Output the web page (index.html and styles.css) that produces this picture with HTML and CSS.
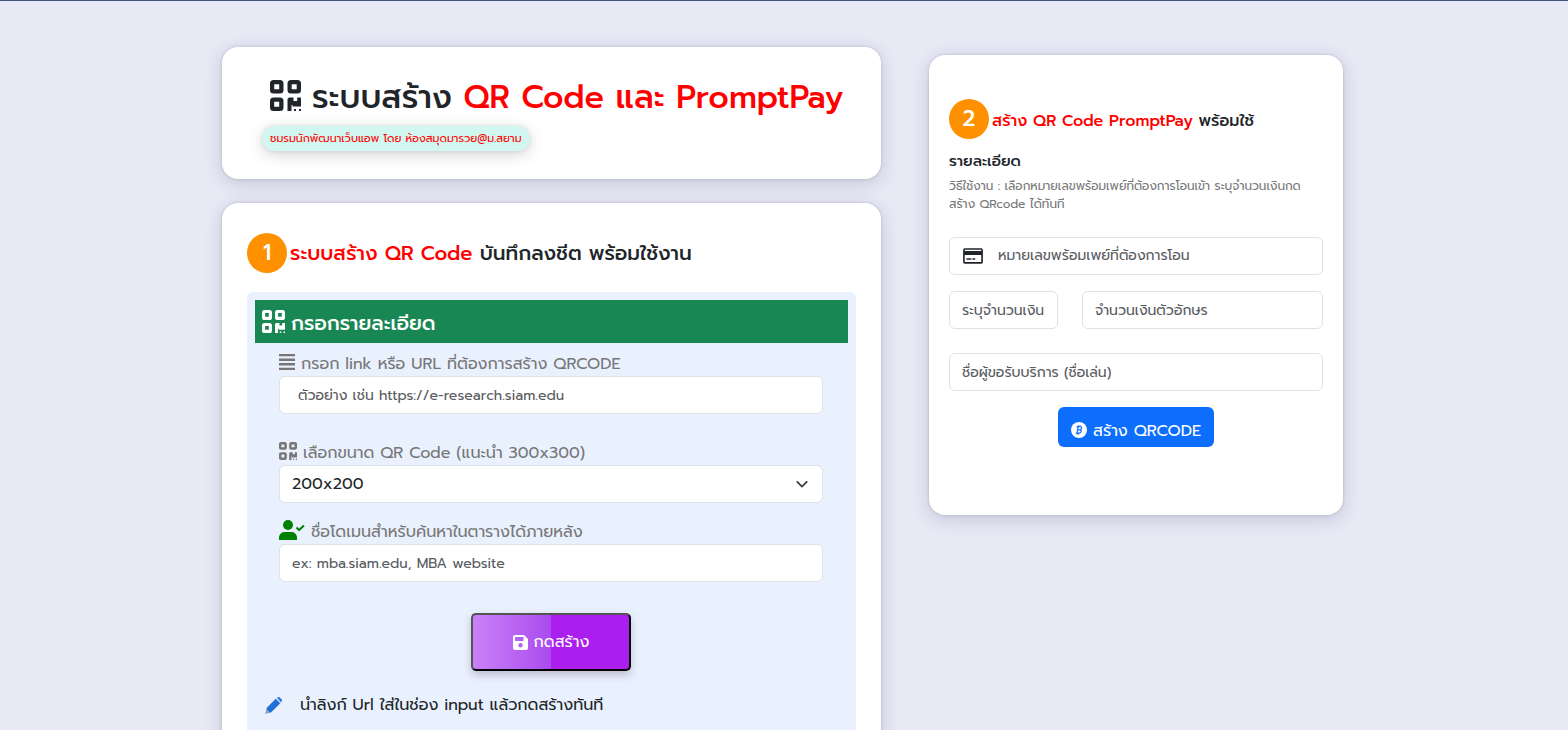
FILE: index.html
```html
<!DOCTYPE html>
<html lang="th">
<head>
<meta charset="utf-8">
<meta name="viewport" content="width=device-width, initial-scale=1">
<title>ระบบสร้าง QR Code และ PromptPay</title>
<link rel="stylesheet" href="styles.css">
</head>
<body>
<svg class="sprite" aria-hidden="true">
  <symbol id="qr" viewBox="0 0 31 31">
    <path fill-rule="evenodd" d="M3.500 0H10a3.500 3.500 0 0 1 3.500 3.500V10a3.500 3.500 0 0 1-3.500 3.500H3.500A3.500 3.500 0 0 1 0 10V3.500A3.500 3.500 0 0 1 3.500 0zM4.200 4.200v5h5v-5zM21 0h6.500A3.500 3.500 0 0 1 31 3.500V10a3.500 3.500 0 0 1-3.500 3.500H21a3.500 3.500 0 0 1-3.500-3.500V3.500A3.500 3.500 0 0 1 21 0zM21.700 4.200v5h5v-5zM3.500 17.500H10a3.500 3.500 0 0 1 3.500 3.500v6.500A3.500 3.500 0 0 1 10 31H3.500A3.500 3.500 0 0 1 0 27.500V21a3.500 3.500 0 0 1 3.500-3.500zM4.200 21.700v5h5v-5zM19 17.500h4.500V21h3.700v-3.500H31v9h-8.500v-1.500h-1V31h-4V19zM24 29h2v2h-2zM29 29h2v2h-2z"/>
  </symbol>
</svg>
<div class="page">
  <main class="main">
    <header class="card hero">
      <h1 class="title"><svg class="title-icon" aria-hidden="true"><use href="#qr"/></svg><span class="title-text">ระบบสร้าง <span class="red">QR Code และ PromptPay</span></span></h1>
      <span class="pill">ชมรมนักพัฒนาเว็บแอพ โดย ห้องสมุดมารวย@ม.สยาม</span>
    </header>

    <section class="card builder">
      <h2 class="step"><span class="num">1</span><span><span class="red">ระบบสร้าง QR Code</span> บันทึกลงชีต พร้อมใช้งาน</span></h2>
      <div class="panel">
        <h3 class="bar"><svg class="bar-icon" aria-hidden="true"><use href="#qr"/></svg><span class="bar-text">กรอกรายละเอียด</span></h3>
        <form class="form">
          <div class="group group-wide">
            <label class="label" for="link"><svg class="icon-16" viewBox="0 0 16 16" aria-hidden="true"><path d="M0 0h16v2.300H0zM0 4.600h16v2.300H0zM0 9.100h16v2.300H0zM0 13.700h16V16H0z"/></svg>กรอก link หรือ URL ที่ต้องการสร้าง QRCODE</label>
            <input class="input indent" id="link" type="text" placeholder="ตัวอย่าง เช่น https://e-research.siam.edu">
          </div>
          <div class="group">
            <label class="label" for="size"><svg class="icon-18" aria-hidden="true"><use href="#qr"/></svg>เลือกขนาด QR Code (แนะนำ 300x300)</label>
            <div class="select-box">
              <select class="input select" id="size"><option>200x200</option><option>300x300</option></select>
              <svg class="chevron" viewBox="0 0 16 16" aria-hidden="true"><path d="m2 5 6 6 6-6"/></svg>
            </div>
          </div>
          <div class="group">
            <label class="label" for="domain"><svg class="icon-user" viewBox="0 0 26 20" aria-hidden="true"><circle cx="9" cy="5" r="5"/><path d="M0 20v-2.500C0 14 3 12 6 12h6c3 0 6 2 6 5.500V20z"/><path class="tick" d="m17.500 7.500 2.500 2.500 5-4.500"/></svg>ชื่อโดเมนสำหรับค้นหาในตารางได้ภายหลัง</label>
            <input class="input" id="domain" type="text" placeholder="ex: mba.siam.edu, MBA website">
          </div>
          <button class="create" type="button"><svg class="icon-15" viewBox="0 0 15 15" aria-hidden="true"><path fill-rule="evenodd" d="M2 0h9l4 4v9a2 2 0 0 1-2 2H2a2 2 0 0 1-2-2V2a2 2 0 0 1 2-2zM2 2v4h8.500V2zM7.500 8a2.200 2.200 0 1 0 0 4.400 2.200 2.200 0 0 0 0-4.400z"/></svg>กดสร้าง</button>
        </form>
        <p class="tip"><svg class="pencil" viewBox="0 0 17 17" aria-hidden="true"><path fill="#1f70d8" d="m11 1.500 4.500 4.500-9.500 9.500L1 16l.8-5.300z"/><path fill="#2878dc" d="m12 .8.500-.4a1.800 1.800 0 0 1 2.300 0l1.800 1.800a1.800 1.800 0 0 1 0 2.300l-.6.700z"/><path fill="none" stroke="#9bbdf0" d="m11 1.800 4.300 4.300"/><path fill="#8ba3c4" d="m1.500 12 3.500 3.500L0 17z"/></svg>นำลิงก์ Url ใส่ในช่อง input แล้วกดสร้างทันที</p>
      </div>
    </section>
  </main>

  <aside class="card side">
    <h2 class="step step-small"><span class="num">2</span><span class="step-text"><span class="red">สร้าง QR Code PromptPay</span> พร้อมใช้</span></h2>
    <h3 class="detail">รายละเอียด</h3>
    <p class="hint">วิธีใช้งาน : เลือกหมายเลขพร้อมเพย์ที่ต้องการโอนเข้า ระบุจำนวนเงินกดสร้าง QRcode ได้ทันที</p>
    <form class="pay">
      <div class="input account">
        <svg class="credit" viewBox="0 0 20 16" aria-hidden="true"><path fill-rule="evenodd" d="M2.500 1h15A1.500 1.500 0 0 1 19 2.500v11a1.500 1.500 0 0 1-1.500 1.500h-15A1.500 1.500 0 0 1 1 13.500v-11A1.500 1.500 0 0 1 2.500 1zM2.500 2.300v1.200h15V2.300zM2.500 7v6.500h15V7zM4 10h4.500v1.500H4zM9.500 10H12v1.500H9.500z"/></svg>
        <input class="bare" type="text" aria-label="หมายเลขพร้อมเพย์" placeholder="หมายเลขพร้อมเพย์ที่ต้องการโอน">
      </div>
      <div class="amounts">
        <input class="input" type="text" aria-label="ระบุจำนวนเงิน" placeholder="ระบุจำนวนเงิน">
        <input class="input" type="text" aria-label="จำนวนเงินตัวอักษร" placeholder="จำนวนเงินตัวอักษร">
      </div>
      <input class="input" type="text" aria-label="ชื่อผู้ขอรับบริการ" placeholder="ชื่อผู้ขอรับบริการ (ชื่อเล่น)">
      <button class="pay-button" type="button"><svg class="icon-16" viewBox="0 0 16 16" aria-hidden="true"><circle cx="8" cy="8" r="8" fill="#fff"/><path fill="none" stroke="#0d6efd" stroke-width="1.200" d="M5.500 4.700h3.700c2.200 0 1.700 2.900-.2 3.100 2 0 1.500 3.300-.8 3.300H4.800M7.200 4.700l-1.200 6.400M6.600 7.800H9M7.700 3.300l-.2 1.200M9.300 3.500l-.2 1M6.300 11.300l-.2 1.200M8 11.300l-.2 1.200"/></svg><span class="pay-text">สร้าง QRCODE</span></button>
    </form>
  </aside>
</div>
</body>
</html>
```
FILE: styles.css
```css
* { box-sizing: border-box; }

body {
  margin: 0;
  border-top: 1px solid #3d5579;
  background: #e7e9f5;
  color: #212529;
  font-family: Prompt, Inter, "Noto Sans Thai", "Noto Sans", sans-serif;
  font-size: 16px;
  line-height: 24px;
}

h1, h2, h3, p { margin: 0; font-weight: 500; }
input, select, button { font: inherit; color: inherit; }
svg { flex: none; fill: currentColor; }
.sprite { display: none; }
.red { color: #f00; }

.page {
  display: grid;
  grid-template-columns: minmax(0, 659fr) minmax(0, 414fr);
  gap: 48px;
  align-items: start;
  max-width: 1124px;
  margin: 0 auto;
  padding: 46px 3px 48px 0;
}
.main {
  display: grid;
  grid-template-columns: minmax(0, 1fr);
  gap: 24px;
}
.card {
  border-radius: 16px;
  background: #fff;
  box-shadow: 0 0 3px rgba(50, 40, 80, .2), 0 4px 18px rgba(50, 40, 80, .18);
}

.hero { padding: 28px 40px; }
.title {
  display: flex;
  align-items: center;
  gap: 11px;
  padding: 0 8px;
  font-size: 32px;
  line-height: 40px;
  white-space: nowrap;
}
.title-icon { width: 31px; height: 31px; }
.title-text { padding-top: 5px; line-height: 35px; }
.pill {
  display: table;
  margin-top: 11px;
  padding: 1px 8px 0;
  border-radius: 13px;
  background: #d2f7f0;
  box-shadow: 0 4px 16px rgba(0, 0, 0, .16), 0 0 4px rgba(0, 0, 0, .1);
  color: #f00;
  font-size: 11px;
  line-height: 24px;
  white-space: nowrap;
}

.builder { padding: 30px 25px; }
.step {
  display: flex;
  align-items: center;
  gap: 3px;
  font-size: 20px;
  white-space: nowrap;
}
.step-small { font-size: 16px; }
.step-text { padding-top: 4px; }
.num {
  flex: none;
  width: 40px;
  border-radius: 50%;
  background: #ff9000;
  color: #fff;
  font-size: 22px;
  line-height: 40px;
  text-align: center;
}
.panel {
  margin-top: 19px;
  padding: 8px 8px 48px;
  border-radius: 6px;
  background: #eaf1fe;
}
.bar {
  display: flex;
  align-items: center;
  gap: 6px;
  padding: 0 7px;
  background: #198754;
  color: #fff;
  font-size: 20px;
}
.bar-icon { width: 23px; height: 23px; }
.bar-text { padding-top: 4px; line-height: 39px; }
.form { display: grid; padding: 9px 25px 0 24px; }
.group { margin-bottom: 17px; }
.group-wide { margin-bottom: 27px; }
.label {
  display: flex;
  align-items: center;
  gap: 6px;
  height: 24px;
  color: #777;
  white-space: nowrap;
}
.label svg { margin-bottom: 5px; }
.icon-15 { width: 15px; height: 15px; }
.icon-16 { width: 16px; height: 16px; }
.icon-18 { width: 18px; height: 18px; }
.icon-user { width: 26px; height: 20px; color: #008000; }
.tick { fill: none; stroke: currentColor; stroke-width: 2; }
.input {
  display: block;
  width: 100%;
  height: 38px;
  padding: 0 12px;
  border: 1px solid #dee2e6;
  border-radius: 6px;
  background: #fff;
  font-size: 14px;
}
.indent { padding-left: 18px; }
::placeholder { color: #595c5f; opacity: 1; }
.select-box { position: relative; }
.select { appearance: none; font-size: 16px; }
.chevron {
  position: absolute;
  top: 12px;
  right: 14px;
  width: 14px;
  height: 14px;
  fill: none;
  stroke: #343a40;
  stroke-width: 2;
  pointer-events: none;
}
.create {
  display: flex;
  align-items: center;
  justify-content: center;
  gap: 6px;
  width: 160px;
  height: 58px;
  margin: 14px auto 0;
  border: 2px outset #000;
  border-radius: 5px;
  background: linear-gradient(90deg, #c982f8, #ab4bef 50%, #aa1eee 50%);
  box-shadow: 0 4px 8px rgba(50, 30, 70, .25);
  color: #fff;
}
.tip {
  display: flex;
  align-items: center;
  gap: 18px;
  padding: 22px 10px 0;
  font-weight: 400;
}
.pencil { width: 17px; height: 17px; }

.side { min-height: 460px; margin-top: 8px; padding: 44px 20px; }
.detail { margin-top: 10px; font-size: 15px; }
.hint {
  margin-top: 4px;
  color: #777;
  font-size: 12px;
  font-weight: 400;
  line-height: 18px;
}
.pay { display: grid; margin-top: 24px; }
.account { display: flex; align-items: center; gap: 14px; }
.bare {
  flex: 1;
  min-width: 0;
  padding: 0;
  border: 0;
  outline: 0;
  background: none;
}
.credit { width: 22px; height: 18px; }
.amounts {
  display: grid;
  grid-template-columns: 109fr 241fr;
  gap: 24px;
  margin: 16px 0 24px;
}
.pay-button {
  display: flex;
  align-items: center;
  justify-content: center;
  gap: 6px;
  min-width: 156px;
  height: 40px;
  margin: 16px auto 0;
  padding: 5px 12px 0;
  border: 0;
  border-radius: 6px;
  background: #0d6efd;
  color: #fff;
  white-space: nowrap;
}
.pay-text { padding-top: 2px; }
```
